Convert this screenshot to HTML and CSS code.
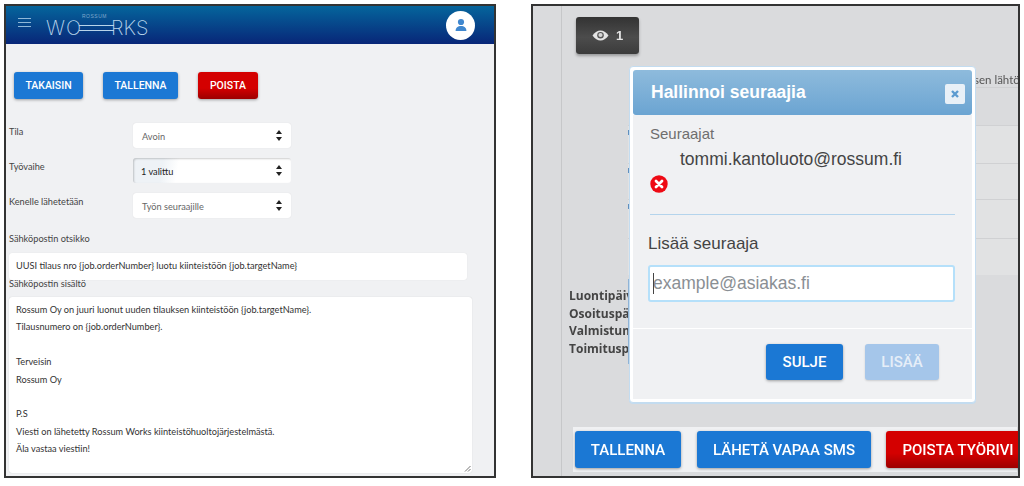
FILE: index.html
```html
<!DOCTYPE html>
<html lang="fi">
<head>
<meta charset="utf-8">
<title>Rossum Works</title>
<link rel="stylesheet" href="styles.css">
</head>
<body>
<div class="sheet">
  <section class="left">
    <header class="topbar">
      <div class="burger"><i></i><i></i><i></i></div>
      <div class="logo">
        <span class="logo-small">ROSSUM</span>
        <span class="logo-main"><span class="logo-wo">WO</span><span class="logo-lines"></span><span>RKS</span></span>
      </div>
      <div class="avatar">
        <svg width="14" height="14" viewBox="0 0 14 14"><circle cx="7" cy="4" r="3.1" fill="#3f87cf"/><path d="M1.6 13c0-3.4 2.2-5 5.4-5s5.400 1.600 5.400 5z" fill="#3f87cf"/></svg>
      </div>
    </header>
    <div class="content">
      <div class="actions">
        <button class="btn blue b-back">TAKAISIN</button>
        <button class="btn blue b-save">TALLENNA</button>
        <button class="btn red b-del">POISTA</button>
      </div>
      <div class="row"><label>Tila</label><div class="select">Avoin<span class="arrows"></span></div></div>
      <div class="row"><label>Työvaihe</label><div class="select active">1 valittu<span class="arrows"></span></div></div>
      <div class="row"><label>Kenelle lähetetään</label><div class="select">Työn seuraajille<span class="arrows"></span></div></div>
      <div class="cap first">Sähköpostin otsikko</div>
      <div class="subject">UUSI tilaus nro {job.orderNumber} luotu kiinteistöön {job.targetName}</div>
      <div class="cap second">Sähköpostin sisältö</div>
      <div class="message">
        <p>Rossum Oy on juuri luonut uuden tilauksen kiinteistöön {job.targetName}.</p>
        <p>Tilausnumero on {job.orderNumber}.</p>
        <p>&nbsp;</p>
        <p>Terveisin</p>
        <p>Rossum Oy</p>
        <p>&nbsp;</p>
        <p>P.S</p>
        <p>Viesti on lähetetty Rossum Works kiinteistöhuoltojärjestelmästä.</p>
        <p>Äla vastaa viestiin!</p>
        <svg class="grip" width="7" height="7" viewBox="0 0 7 7"><path d="M1 6.500 6.500 1M4 6.500 6.500 4" stroke="#777" fill="none"/></svg>
      </div>
    </div>
  </section>

  <section class="right">
    <aside class="rail"></aside>
    <div class="page">
      <div class="eye-btn">
        <svg width="17" height="11" viewBox="0 0 17 11"><path d="M.5 5.500C3 2 5.600.5 8.500.5s5.500 1.500 8 5c-2.500 3.500-5.100 5-8 5s-5.500-1.500-8-5z" fill="#e4e4e4"/><circle cx="8.500" cy="5.200" r="3.300" fill="#555"/><circle cx="8.500" cy="5" r="2.100" fill="#d5d5d5"/></svg>
        <span>1</span>
      </div>
      <div class="bg-title">sen lähtö</div>
      <div class="bg-table">
        <div class="bg-row r1"><b></b><em>i</em></div>
        <div class="bg-row r2"><b></b></div>
        <div class="bg-row r3"><b></b></div>
        <div class="bg-row r4"></div>
      </div>
      <div class="bg-dates">
        <div>Luontipäivä</div>
        <div>Osoituspäivä</div>
        <div>Valmistumispäivä</div>
        <div>Toimituspäivä</div>
      </div>
      <div class="bottom-bar">
        <button class="btn2 blue w-save">TALLENNA</button>
        <button class="btn2 blue w-sms">LÄHETÄ VAPAA SMS</button>
        <button class="btn2 red w-del">POISTA TYÖRIVI</button>
      </div>
    </div>

    <div class="modal">
      <div class="modal-head">
        <h2>Hallinnoi seuraajia</h2>
        <span class="close">
          <svg width="10" height="10" viewBox="0 0 10 10"><path d="M2 2l6 6M8 2 2 8" stroke="#5b9bd0" stroke-width="2.400"/></svg>
        </span>
      </div>
      <div class="modal-body">
        <div class="followers">Seuraajat</div>
        <div class="email">tommi.kantoluoto@rossum.fi</div>
        <svg class="remove" width="18" height="18" viewBox="0 0 18 18"><circle cx="9" cy="9" r="8.700" fill="#ee0a14"/><path d="M6 6l6 6M12 6l-6 6" stroke="#fff" stroke-width="2.800" stroke-linecap="round"/></svg>
        <div class="divider"></div>
        <div class="add-title">Lisää seuraaja</div>
        <div class="field"><i class="caret"></i>example@asiakas.fi</div>
      </div>
      <div class="modal-foot">
        <button class="btn3 blue m-close">SULJE</button>
        <button class="btn3 pale m-add">LISÄÄ</button>
      </div>
    </div>
  </section>
</div>
</body>
</html>
```
FILE: styles.css
```css
* { box-sizing: border-box; }
html, body { margin: 0; padding: 0; background: #fff; }
body { width: 1024px; height: 486px; overflow: hidden; font-family: Lato, "Open Sans", sans-serif; }
.sheet { display: flex; gap: 35px; padding: 4px 4px 0 4px; filter: blur(.4px); }

button { font-family: Roboto, "Liberation Sans", sans-serif; font-weight: 500; color: #fff; border: 0; padding: 0; border-radius: 3px; }
.blue { background: #1b78d4; box-shadow: 0 1px 3px rgba(0,0,0,.35); }
.red { background: linear-gradient(#d40000 60%, #9c0000); box-shadow: 0 1px 3px rgba(0,0,0,.35); }
.pale { background: #a5c6ea; color: #e6eef8; box-shadow: 0 1px 2px rgba(0,0,0,.15); }

/* Left screenshot */
.left { width: 492px; height: 474px; border: 2px solid #333; background: #f0f1f3; overflow: hidden; flex: none; }
.topbar { height: 38px; background: linear-gradient(#05659c, #082678); display: flex; align-items: center; padding: 0 19px 0 12px; }
.burger { width: 13px; display: flex; flex-direction: column; gap: 3px; margin-top: -6px; }
.burger i { display: block; height: 1px; background: #8fb8d8; }
.logo { margin-left: 15px; display: flex; flex-direction: column; color: #b8d4ea; }
.logo-small { font: 5px/5px "Liberation Sans", sans-serif; letter-spacing: .5px; padding-left: 36px; color: #7fa8cc; }
.logo-main { display: flex; align-items: center; font: 200 20px/17px Inter, "Liberation Sans", sans-serif; height: 17px; margin-top: 1px; }
.logo-wo { letter-spacing: 1px; }
.logo-lines { width: 35px; height: 6px; border-top: 1px solid #b8d4ea; border-bottom: 1px solid #b8d4ea; margin: -1px -3px 0 -3px; }
.avatar { margin-left: auto; width: 29px; height: 29px; border-radius: 50%; background: #fff; display: flex; align-items: center; justify-content: center; }

.content { padding: 28px 0 0 3px; }
.actions { display: flex; padding-left: 5px; margin-bottom: 24px; }
.btn { height: 27px; font-size: 10.500px; }
.b-back { width: 69px; }
.b-save { width: 75px; margin-left: 20px; }
.b-del { width: 60px; margin-left: 20px; }

.row { display: flex; height: 25px; margin-bottom: 10px; font-size: 9.200px; color: #444; }
.row label { width: 124px; line-height: 18px; }
.select { position: relative; width: 158px; background: #fff; border-radius: 3px; padding-left: 9px; line-height: 27px; color: #666; box-shadow: 0 0 1px rgba(0,0,0,.15); }
.select.active { color: #222; padding-left: 8px; box-shadow: inset 1px 1px 2px rgba(0,0,0,.2); background: linear-gradient(100deg, #eef2f6 30px, #fff 46px); }
.arrows { position: absolute; right: 9px; top: 7px; width: 6px; height: 11px; }
.arrows::before, .arrows::after { content: ""; position: absolute; left: 0; border-left: 3px solid transparent; border-right: 3px solid transparent; }
.arrows::before { top: 0; border-bottom: 4px solid #222; }
.arrows::after { bottom: 0; border-top: 4px solid #222; }

.cap { font-size: 9.200px; line-height: 12px; color: #444; }
.cap.first { margin-top: 15px; margin-bottom: 8px; }
.subject { width: 458px; height: 27px; background: #fff; border-radius: 3px; padding-left: 7px; font-size: 9.200px; line-height: 26px; color: #333; margin-bottom: -2px; box-shadow: 0 0 1px rgba(0,0,0,.12); }
.cap.second { margin-bottom: 7px; }
.message { position: relative; width: 463px; height: 176px; background: #fff; border-radius: 3px; padding: 4px 7px; font-size: 9.200px; color: #333; box-shadow: 0 0 1px rgba(0,0,0,.2); }
.message p { margin: 0; height: 17.400px; line-height: 17.400px; }
.grip { position: absolute; right: 1px; bottom: 1px; }

/* Right screenshot */
.right { position: relative; display: flex; width: 489px; height: 474px; border: 2px solid #333; background: #dadbdd; overflow: hidden; flex: none; }
.rail { width: 29px; border-right: 1px solid #c6c7c9; flex: none; }
.page { flex: 1; min-width: 0; padding: 11px 0 0 14px; }
.eye-btn { width: 63px; height: 37px; border-radius: 3px; background: linear-gradient(#333, #4c4c4c 55%, #3b3b3b); box-shadow: 0 2px 3px rgba(0,0,0,.3); display: flex; align-items: center; gap: 7px; padding-left: 16px; color: #e4e4e4; font: 700 13px "Liberation Sans", sans-serif; }
.bg-title { font-size: 11.500px; line-height: 14px; color: #555; margin: 19px 0 0 398px; white-space: nowrap; border-bottom: 1px solid #cfd0d2; }
.bg-table { margin: 37px 0 0 52px; width: 400px; height: 150px; background: #e1e2e3; border-top: 1px solid #d0d1d3; }
.bg-row { position: relative; border-bottom: 1px solid #d0d1d3; }
.r1 { height: 38px; }
.r2 { height: 36px; }
.r3 { height: 39px; }
.r4 { height: 36px; border-bottom: 0; }
.bg-row b { position: absolute; left: 0; top: 4px; width: 2px; height: 5px; background: #5f8fbf; }
.bg-row em { position: absolute; left: 346px; top: 21px; font-size: 10px; color: #3c78b8; }
.bg-dates { position: relative; margin: 12px 0 0 -7px; font: 700 12px/17.500px "Open Sans", sans-serif; color: #444; height: 70px; white-space: nowrap; }
.bg-dates::after { content: ""; position: absolute; left: 59px; top: -8px; width: 1px; height: 85px; background: #8fb3d6; }
.bottom-bar { margin: 70px 0 0 -3px; width: 444px; height: 45px; background: #f0f1f3; display: flex; align-items: center; padding-left: 2px; }
.btn2 { height: 37px; font-size: 15px; flex: none; }
.w-save { width: 106px; }
.w-sms { width: 174px; margin-left: 16px; }
.w-del { width: 144px; margin-left: 15px; border-radius: 3px 0 0 3px; }

.modal { position: absolute; left: 96px; top: 60px; width: 347px; height: 337px; background: #fff; border: 1px solid #c3dcf0; border-radius: 4px; padding: 3px; display: flex; flex-direction: column; box-shadow: 0 1px 0 #c3dcf0; font-family: "Liberation Sans", sans-serif; }
.modal-head { height: 45px; flex: none; background: linear-gradient(#8ebbdc, #6ba4d2); border-radius: 3px; display: flex; align-items: center; justify-content: space-between; padding: 0 7px 0 18px; }
.modal-head h2 { margin: 0; font-size: 17.500px; color: #fff; font-weight: 700; }
.close { width: 20px; height: 20px; border-radius: 2px; background: #e8f0f7; display: flex; align-items: center; justify-content: center; margin-top: 2px; }
.modal-body { flex: 1; background: #f0f1f3; padding: 10px 17px 0 15px; border-bottom: 1px solid #fff; }
.followers { font-size: 15px; line-height: 18px; color: #6e6e6e; margin-left: 2px; }
.email { font-size: 17.500px; line-height: 20px; color: #444; margin: 6px 0 0 32px; }
.remove { display: block; margin: 6px 0 0 2px; }
.divider { height: 1px; background: #b4d4ec; margin: 21px 0 0 2px; }
.add-title { font-size: 17px; line-height: 20px; color: #444; margin-top: 19px; }
.field { position: relative; height: 37px; margin-top: 11px; background: #fff; border: 2px solid #b5e0fa; border-radius: 3px; padding-left: 3px; font-size: 17.500px; line-height: 32px; color: #8a8f94; }
.caret { position: absolute; left: 3px; top: 6px; width: 1px; height: 21px; background: #444; }
.modal-foot { height: 70px; flex: none; background: #f0f1f3; display: flex; padding: 15px 0 0 133px; }
.btn3 { height: 36px; font-size: 15px; }
.m-close { width: 77px; }
.m-add { width: 74px; margin-left: 22px; }
```
